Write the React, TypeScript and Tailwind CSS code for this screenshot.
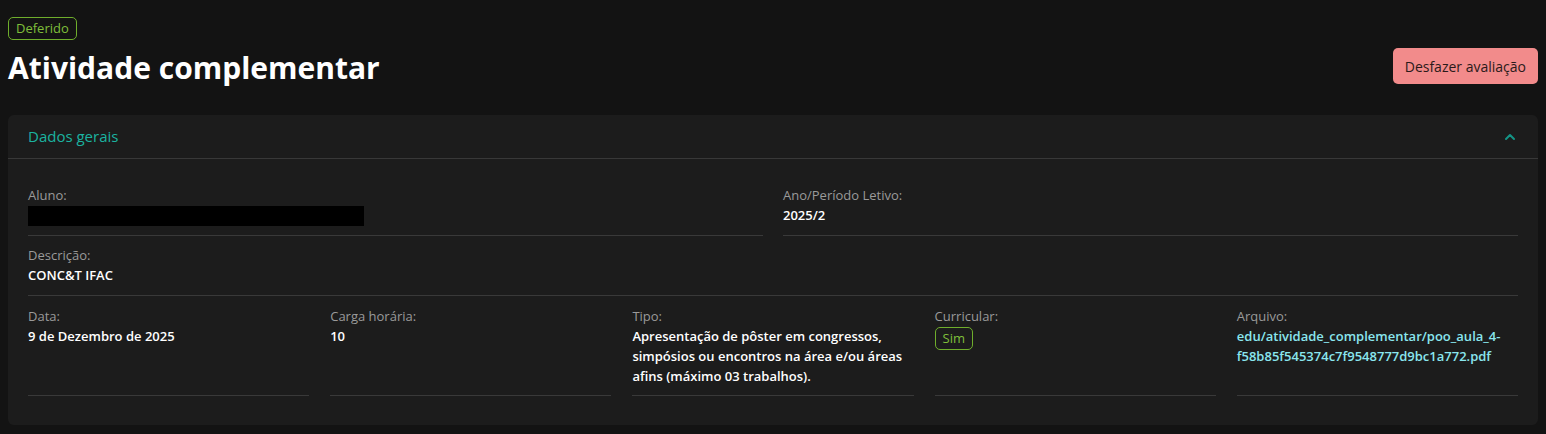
import { ChevronUp } from 'lucide-react';

interface FieldProps {
  label: string;
  children: React.ReactNode;
  className?: string;
}

function Field({ label, children, className = '' }: FieldProps) {
  return (
    <div className={`border-b border-[#393939] ${className}`}>
      <p className="text-[13px] leading-[20px] text-[#9a9a9a]">{label}</p>
      <div className="text-[13px] leading-[20px] font-semibold text-white">{children}</div>
    </div>
  );
}

export default function App() {
  return (
    <div
      className="min-h-[434px] bg-[#131313] px-2 pt-[15px] pb-2"
      style={{ fontFamily: '"Open Sans", "Noto Sans", sans-serif' }}
    >
      {/* Header */}
      <div className="flex items-end justify-between">
        <div>
          <span className="inline-block rounded-[5px] border border-[#6fae2c] px-[7px] text-[13px] leading-[21px] text-[#7fbf3a]">
            Deferido
          </span>
          <h1 className="mt-[9px] text-[30px] leading-[38px] font-bold text-white">Atividade complementar</h1>
        </div>
        <button className="mb-[3px] h-[36px] rounded-[5px] bg-[#f28b8b] px-[12px] text-[14px] text-[#2a1a1a]">
          Desfazer avaliação
        </button>
      </div>

      {/* Card */}
      <div className="mt-[28px] rounded-[6px] bg-[#1c1c1c]">
        <div className="flex h-[44px] items-center justify-between border-b border-[#383838] px-5">
          <h2 className="text-[15px] text-[#1bb3a0]">Dados gerais</h2>
          <ChevronUp className="h-4 w-4 text-[#149486]" strokeWidth={3} />
        </div>

        <div className="px-5 pt-[26px] pb-[29px]">
          <div className="grid grid-cols-2 gap-x-5">
            <Field label="Aluno:" className="pb-[9px]">
              <div className="mt-[1px] h-[20px] w-[336px] bg-black" />
            </Field>
            <Field label="Ano/Período Letivo:" className="pb-[10px]">
              2025/2
            </Field>
          </div>

          <Field label="Descrição:" className="mt-[9px] pb-[10px]">
            CONC&amp;T IFAC
          </Field>

          <div className="mt-[10px] grid grid-cols-5 gap-x-[21px]">
            <Field label="Data:" className="h-[90px]">
              9 de Dezembro de 2025
            </Field>
            <Field label="Carga horária:" className="h-[90px]">
              10
            </Field>
            <Field label="Tipo:" className="h-[90px]">
              Apresentação de pôster em congressos, simpósios ou encontros na área e/ou áreas afins (máximo 03
              trabalhos).
            </Field>
            <Field label="Curricular:" className="h-[90px]">
              <span className="mt-[1px] inline-block rounded-[5px] border border-[#6fae2c] px-[7px] text-[13px] leading-[21px] font-normal text-[#7fbf3a]">
                Sim
              </span>
            </Field>
            <Field label="Arquivo:" className="h-[90px]">
              <span className="break-words font-semibold text-[#8ae6ee]">
                edu/atividade_complementar/poo_aula_4-f58b85f545374c7f9548777d9bc1a772.pdf
              </span>
            </Field>
          </div>
        </div>
      </div>
    </div>
  );
}
